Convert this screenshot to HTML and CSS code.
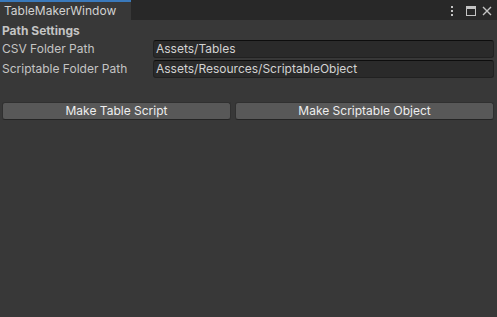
FILE: index.html
```html
<!DOCTYPE html>
<html lang="en">
<head>
    <meta charset="UTF-8">
    <title>TableMakerWindow</title>
    <link rel="stylesheet" href="styles.css">
</head>
<body>
    <div class="window">
        <div class="tab-bar">
            <div class="tab">TableMakerWindow</div>
            <div class="tab-actions">
                <svg class="icon-menu" width="4" height="12" viewBox="0 0 4 12"><rect x="1" y="1" width="2" height="2" fill="#c4c4c4"/><rect x="1" y="5" width="2" height="2" fill="#c4c4c4"/><rect x="1" y="9" width="2" height="2" fill="#c4c4c4"/></svg>
                <svg width="10" height="10" viewBox="0 0 10 10"><rect x="0.5" y="0.5" width="9" height="9" fill="none" stroke="#c4c4c4"/><rect x="1" y="1" width="8" height="2" fill="#c4c4c4"/></svg>
                <svg width="10" height="10" viewBox="0 0 10 10"><path d="M1 1 L9 9 M9 1 L1 9" stroke="#c4c4c4" stroke-width="1.4"/></svg>
            </div>
        </div>

        <div class="content">
            <div class="section-title">Path Settings</div>
            <div class="field-row">
                <span class="label">CSV Folder Path</span>
                <div class="text-field">Assets/Tables</div>
            </div>
            <div class="field-row">
                <span class="label">Scriptable Folder Path</span>
                <div class="text-field">Assets/Resources/ScriptableObject</div>
            </div>

            <div class="button-row">
                <button class="btn btn-table">Make Table Script</button>
                <button class="btn btn-object">Make Scriptable Object</button>
            </div>
        </div>
    </div>
</body>
</html>
```

FILE: styles.css
```css
* {
    margin: 0;
    padding: 0;
    box-sizing: border-box;
}

body {
    font-family: Inter, "Noto Sans", sans-serif;
    font-size: 12px;
    color: #c4c4c4;
    background-color: #383838;
    width: 497px;
    height: 317px;
    overflow: hidden;
}

.tab-bar {
    height: 20px;
    background-color: #282828;
    display: flex;
    align-items: stretch;
    justify-content: space-between;
}

.tab {
    width: 131px;
    background-color: #383838;
    border-top: 2px solid #3a79bb;
    padding-left: 4px;
    line-height: 18px;
    color: #d2d2d2;
}

.tab-actions {
    display: flex;
    align-items: center;
    gap: 6px;
    padding-right: 5px;
    padding-top: 1px;
}

.icon-menu {
    margin-right: 6px;
}

.content {
    padding: 3px 3px 0 2px;
}

.section-title {
    font-weight: 700;
    height: 17px;
    line-height: 16px;
}

.field-row {
    display: flex;
    align-items: center;
    height: 18px;
    margin-bottom: 2px;
}

.label {
    width: 151px;
    flex-shrink: 0;
    line-height: 18px;
}

.text-field {
    flex-grow: 1;
    height: 18px;
    background-color: #2a2a2a;
    border: 1px solid #212121;
    border-top-color: #0d0d0d;
    border-radius: 3px;
    padding-left: 2px;
    line-height: 16px;
    color: #d2d2d2;
}

.button-row {
    display: flex;
    gap: 4px;
    margin-top: 24px;
}

.btn {
    height: 18px;
    background-color: #585858;
    border: 1px solid #303030;
    border-bottom-color: #242424;
    border-radius: 3px;
    font-family: inherit;
    font-size: 12px;
    color: #eeeeee;
    line-height: 16px;
}

.btn-table {
    width: 229px;
    flex-shrink: 0;
}

.btn-object {
    flex-grow: 1;
}
```
